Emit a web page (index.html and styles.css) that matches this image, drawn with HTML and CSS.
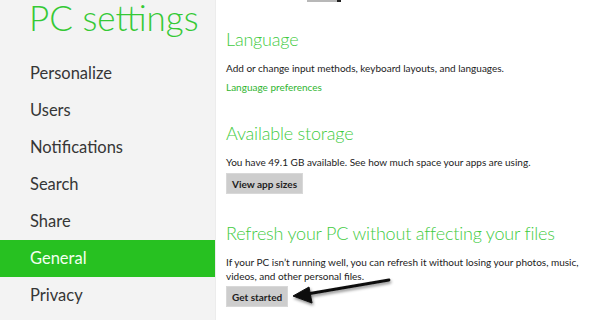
FILE: index.html
```html
<!DOCTYPE html>
<html lang="en">
<head>
    <meta charset="UTF-8">
    <title>PC settings</title>
    <link rel="stylesheet" href="styles.css">
</head>
<body>
    <!-- Left navigation -->
    <aside class="sidebar">
        <h1 class="page-title">PC settings</h1>
        <nav class="nav-list">
            <a href="#" class="nav-item">Personalize</a>
            <a href="#" class="nav-item">Users</a>
            <a href="#" class="nav-item">Notifications</a>
            <a href="#" class="nav-item">Search</a>
            <a href="#" class="nav-item">Share</a>
            <a href="#" class="nav-item active">General</a>
            <a href="#" class="nav-item">Privacy</a>
        </nav>
    </aside>

    <!-- Settings content -->
    <main class="content">
        <div class="scroll-thumb"></div>

        <section class="group">
            <h2 class="group-title">Language</h2>
            <p class="group-text">Add or change input methods, keyboard layouts, and languages.</p>
            <a href="#" class="group-link">Language preferences</a>
        </section>

        <section class="group">
            <h2 class="group-title">Available storage</h2>
            <p class="group-text">You have 49.1 GB available. See how much space your apps are using.</p>
            <button class="btn">View app sizes</button>
        </section>

        <section class="group">
            <h2 class="group-title">Refresh your PC without affecting your files</h2>
            <p class="group-text">If your PC isn’t running well, you can refresh it without losing your photos, music, videos, and other personal files.</p>
            <button class="btn">Get started</button>
        </section>

        <!-- Annotation arrow -->
        <svg class="arrow" width="120" height="40" viewBox="0 0 120 40">
            <defs>
                <filter id="shadow" x="-20%" y="-50%" width="140%" height="200%">
                    <feDropShadow dx="1" dy="2" stdDeviation="1.5" flood-color="#000" flood-opacity="0.45"/>
                </filter>
            </defs>
            <g filter="url(#shadow)" fill="#111" stroke="#111">
                <line x1="102" y1="6" x2="20" y2="20" stroke-width="2.8" stroke-linecap="round"/>
                <polygon points="6,22 22,13 25,29" stroke-width="1" stroke-linejoin="round"/>
            </g>
        </svg>
    </main>
</body>
</html>
```

FILE: styles.css
```css
* {
    margin: 0;
    padding: 0;
    box-sizing: border-box;
}

body {
    font-family: 'Lato', 'Open Sans', sans-serif;
    background: #ffffff;
    display: flex;
    height: 320px;
    overflow: hidden;
}

/* Sidebar */
.sidebar {
    width: 216px;
    flex-shrink: 0;
    background: #f3f3f3;
    border-right: 1px solid #ececec;
}

.page-title {
    font-size: 35px;
    font-weight: 300;
    color: #35c935;
    line-height: 34px;
    white-space: nowrap;
    padding: 0 0 0 29px;
    height: 55px;
}

.nav-list {
    display: flex;
    flex-direction: column;
}

.nav-item {
    display: block;
    height: 37px;
    line-height: 36px;
    padding-left: 30px;
    font-size: 16.5px;
    font-weight: 400;
    color: #363636;
    text-decoration: none;
    white-space: nowrap;
}

.nav-item.active {
    background: #27c121;
    color: #f2fff0;
}

/* Content */
.content {
    flex: 1;
    position: relative;
    padding: 27px 0 0 10px;
}

.scroll-thumb {
    position: absolute;
    top: 0;
    left: 91px;
    width: 34px;
    height: 2px;
    background: linear-gradient(90deg, #b8b8b8 0, #b8b8b8 88%, #222 88%);
}

.group {
    margin-bottom: 27px;
}

.group-title {
    font-size: 18px;
    font-weight: 300;
    color: #3fcb3f;
    line-height: 24px;
    letter-spacing: -0.2px;
    margin-bottom: 10px;
}

.group-text {
    font-size: 10px;
    color: #222;
    line-height: 14px;
    max-width: 360px;
}

.group-link {
    display: inline-block;
    margin-top: 2px;
    font-size: 10px;
    line-height: 14px;
    color: #2fb52f;
    text-decoration: none;
}

.btn {
    display: block;
    margin-top: 4px;
    font-family: inherit;
    font-size: 10px;
    font-weight: 700;
    color: #1e1e1e;
    background: #cdcdcd;
    border: 1px solid #d8d8d8;
    padding: 0 5px;
    height: 21px;
}

.group:nth-of-type(3) .btn {
    margin-top: 3px;
}

.arrow {
    position: absolute;
    left: 71px;
    top: 274px;
}
```
